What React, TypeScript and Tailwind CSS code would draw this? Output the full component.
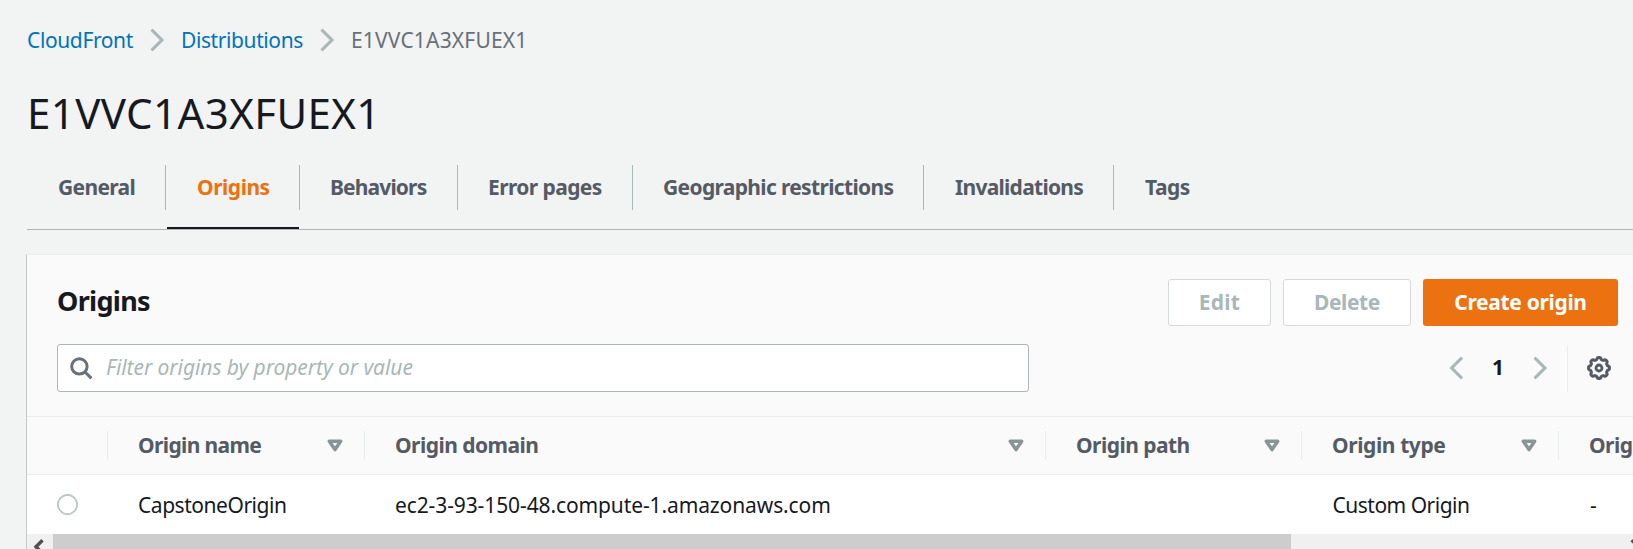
import type { ReactNode } from "react";

function Chevron({ left = false }: { left?: boolean }) {
  return (
    <svg width="15" height="24" viewBox="0 0 15 24" fill="none" stroke="#aab7b8" strokeWidth="3.1">
      <path d={left ? "M13 1.7 2.6 12 13 22.3" : "M1.5 1.7 11.9 12 1.5 22.3"} />
    </svg>
  );
}

function SortIcon() {
  return (
    <svg width="16" height="13" viewBox="0 0 16 13" className="shrink-0">
      <path d="M2.3 2.2h11.4L8 10.6Z" fill="none" stroke="#879596" strokeWidth="3.5" strokeLinejoin="round" />
    </svg>
  );
}

function SearchIcon() {
  return (
    <svg width="23" height="23" viewBox="0 0 23 23" fill="none" stroke="#687078" strokeWidth="3" className="shrink-0">
      <circle cx="9.4" cy="9.4" r="7.7" />
      <path d="M14.8 14.8 21.4 21.4" />
    </svg>
  );
}

const gearOutline =
  Array.from({ length: 96 }, (_, i) => {
    const a = (i / 96) * Math.PI * 2;
    const r = 9.55 + 0.95 * Math.tanh(2.2 * Math.cos(8 * a));
    return `${i ? "L" : "M"}${(12 + r * Math.sin(a)).toFixed(2)} ${(12 - r * Math.cos(a)).toFixed(2)}`;
  }).join("") + "Z";

function GearIcon() {
  return (
    <svg width="24" height="24" viewBox="0 0 24 24" fill="none" stroke="#545b64" strokeWidth="3">
      <path d={gearOutline} strokeLinejoin="round" />
      <circle cx="12" cy="12" r="3" strokeWidth="2.8" />
    </svg>
  );
}

const tabs = [
  { label: "General", cls: "w-[139px] pl-[31px] tracking-[-0.66px]" },
  { label: "Origins", cls: "w-[134px] pl-[31px] tracking-[-0.48px]", active: true },
  { label: "Behaviors", cls: "w-[158px] pl-[30px] tracking-[-0.86px]" },
  { label: "Error pages", cls: "w-[175px] pl-[30px] tracking-[-0.6px]" },
  { label: "Geographic restrictions", cls: "w-[291px] pl-[30px] tracking-[-0.66px]" },
  { label: "Invalidations", cls: "w-[190px] pl-[31px] tracking-[-0.72px]" },
  { label: "Tags", cls: "w-[110px] pl-[31px] tracking-[-0.5px]" },
];

function HeadCell({ cls, children, sortable = true }: { cls: string; children?: ReactNode; sortable?: boolean }) {
  return (
    <div className={`flex h-[29px] shrink-0 items-center justify-between border-r border-[#eaeded] pl-[30px] pr-[21px] ${cls}`}>
      <span className="-mt-[2px] whitespace-nowrap">{children}</span>
      {sortable && <SortIcon />}
    </div>
  );
}

export default function App() {
  return (
    <div className="flex h-[549px] w-full flex-col overflow-hidden bg-[#f2f3f3] pl-[26px] font-['Noto_Sans',sans-serif] text-[21px] leading-[30px] text-[#16191f]">
      <nav className="mt-[25px] flex h-[30px] items-center pl-px">
        <a className="w-[123px] tracking-[-0.38px] text-[#0073bb]">CloudFront</a>
        <Chevron />
        <a className="ml-[16px] w-[139px] tracking-[-0.4px] text-[#0073bb]">Distributions</a>
        <Chevron />
        <span className="ml-[16px] tracking-[0.18px] text-[#687078]">E1VVC1A3XFUEX1</span>
      </nav>
      <h1 className="mt-[28px] h-[60px] pl-px text-[42px] leading-[60px] tracking-[0.42px]">E1VVC1A3XFUEX1</h1>

      <div className="ml-px mt-[22px] flex h-[65px] border-b border-[#aab7b8] font-bold text-[#545b64]">
        {tabs.map((t, i) => (
          <div key={t.label} className={`flex h-[64px] flex-col whitespace-nowrap ${t.active ? "text-[#ec7211]" : ""}`}>
            <div className={`flex h-[45px] items-center pb-px ${i < tabs.length - 1 ? "border-r border-[#aab7b8]" : ""} ${t.cls}`}>{t.label}</div>
            {t.active && <div className="ml-px mr-px mt-auto h-[2px] bg-[#16191f]" />}
          </div>
        ))}
      </div>

      <section className="mt-[24px] flex flex-1 flex-col border-l border-t border-l-[#c4c8c8] border-t-[#eaeded] bg-[#fafafa]">
        <div className="flex h-[161px] flex-col pl-[30px] pr-[15px]">
          <div className="mt-[24px] flex h-[47px] items-center justify-between">
            <h2 className="-mt-[3px] text-[27px] font-bold tracking-[-0.7px]">Origins</h2>
            <div className="flex gap-[12px] font-bold text-[#aab7b8]">
              <button className="h-[47px] w-[103px] rounded-[3px] border border-[#d5dbdb] bg-white pb-[2px] tracking-[0.23px]">Edit</button>
              <button className="h-[47px] w-[128px] rounded-[3px] border border-[#d5dbdb] bg-white pb-[2px] tracking-[-0.4px]">Delete</button>
              <button className="h-[47px] w-[195px] rounded-[3px] bg-[#ec7211] pb-[2px] tracking-[-0.33px] text-white">Create origin</button>
            </div>
          </div>
          <div className="mt-[18px] flex h-[48px] items-center">
            <div className="flex h-[48px] w-[972px] items-center rounded-[3px] border border-[#aab7b8] bg-white pl-[12px]">
              <SearchIcon />
              <span className="-mt-[2px] ml-[13px] italic tracking-[-0.08px] text-[#aab7b8]">Filter origins by property or value</span>
            </div>
            <div className="ml-auto flex h-[47px] items-center">
              <Chevron left />
              <span className="ml-[28px] w-[13px] pb-[2px] font-bold">1</span>
              <span className="ml-[28px] flex"><Chevron /></span>
              <span className="ml-[19px] mr-[19px] h-[47px] w-px bg-[#eaeded]" />
              <span className="mr-[7px]"><GearIcon /></span>
            </div>
          </div>
        </div>
        <div className="flex h-[59px] items-center overflow-hidden border-y border-[#eaeded] font-bold text-[#545b64]">
          <HeadCell cls="w-[81px]" sortable={false} />
          <HeadCell cls="w-[257px] tracking-[-0.63px]">Origin name</HeadCell>
          <HeadCell cls="w-[681px] tracking-[-0.54px]">Origin domain</HeadCell>
          <HeadCell cls="w-[256px] tracking-[-0.54px]">Origin path</HeadCell>
          <HeadCell cls="w-[257px] tracking-[-0.4px]">Origin type</HeadCell>
          <HeadCell cls="w-[257px] tracking-[-0.5px]">Origin</HeadCell>
        </div>
        <div className="flex h-[59px] items-center overflow-hidden whitespace-nowrap bg-white">
          <div className="w-[81px] shrink-0 pl-[30px]">
            <div className="h-[21px] w-[21px] rounded-full border border-[#aab7b8] shadow-[inset_0_0_0_0.7px_#aab7b8]" />
          </div>
          <div className="w-[257px] shrink-0 pl-[30px] tracking-[-0.46px]">CapstoneOrigin</div>
          <div className="w-[681px] shrink-0 pl-[30px] tracking-[-0.11px]">ec2-3-93-150-48.compute-1.amazonaws.com</div>
          <div className="w-[256px] shrink-0" />
          <div className="w-[257px] shrink-0 pl-[30.5px] tracking-[-0.5px]">Custom Origin</div>
          <div className="shrink-0 pl-[31px]">-</div>
        </div>
        <div className="flex flex-1 bg-[#f0f0f0]">
          <div className="h-[15px] w-[26px] overflow-hidden">
            <svg width="26" height="25" viewBox="0 0 26 25" fill="none" stroke="#505050" strokeWidth="3.4">
              <path d="M15.5 6.2 9 12.7l6.5 6.5" />
            </svg>
          </div>
          <div className="w-[1238px] bg-[#cdcdcd]" />
          <div className="ml-auto h-[15px] w-[3px] overflow-hidden">
            <svg width="10" height="25" viewBox="0 0 10 25" fill="none" stroke="#505050" strokeWidth="3">
              <path d="M1.5 6.2 8 12.7" />
            </svg>
          </div>
        </div>
      </section>
    </div>
  );
}
